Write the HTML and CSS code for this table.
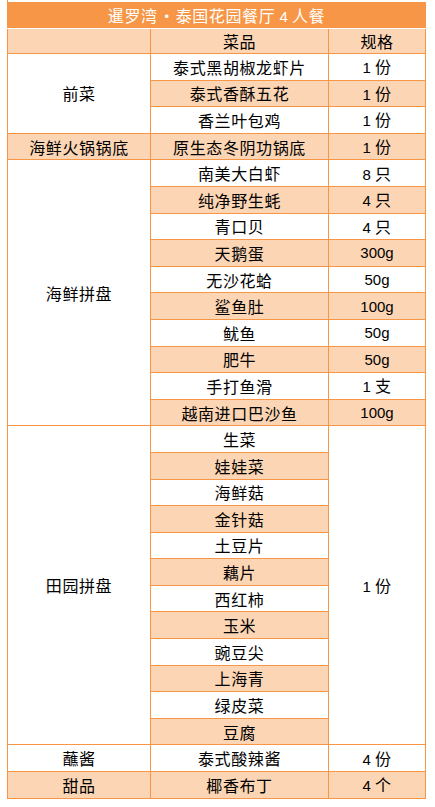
FILE: index.html
```html
<!DOCTYPE html>
<html lang="zh-CN">
<head>
<meta charset="utf-8">
<title>暹罗湾 · 泰国花园餐厅 4 人餐</title>
<link rel="stylesheet" href="styles.css">
</head>
<body>
<div class="sheet">
  <div class="title"><span>暹罗湾<span class="dot">·</span>泰国花园餐厅 <span class="n">4</span> 人餐</span></div>
  <div class="grid">
    <div class="cell c1 hd"></div>
    <div class="cell c2 hd">菜品</div>
    <div class="cell c3 hd">规格</div>

    <div class="cell c1 s3">前菜</div>
    <div class="cell c2">泰式黑胡椒龙虾片</div>
    <div class="cell c3"><span><span class="n">1</span> 份</span></div>
    <div class="cell c2 pk">泰式香酥五花</div>
    <div class="cell c3 pk"><span><span class="n">1</span> 份</span></div>
    <div class="cell c2">香兰叶包鸡</div>
    <div class="cell c3"><span><span class="n">1</span> 份</span></div>

    <div class="cell c1 pk">海鲜火锅锅底</div>
    <div class="cell c2 pk">原生态冬阴功锅底</div>
    <div class="cell c3 pk"><span><span class="n">1</span> 份</span></div>

    <div class="cell c1 s10">海鲜拼盘</div>
    <div class="cell c2">南美大白虾</div>
    <div class="cell c3"><span><span class="n">8</span> 只</span></div>
    <div class="cell c2 pk">纯净野生蚝</div>
    <div class="cell c3 pk"><span><span class="n">4</span> 只</span></div>
    <div class="cell c2">青口贝</div>
    <div class="cell c3"><span><span class="n">4</span> 只</span></div>
    <div class="cell c2 pk">天鹅蛋</div>
    <div class="cell c3 pk"><span class="n">300g</span></div>
    <div class="cell c2">无沙花蛤</div>
    <div class="cell c3"><span class="n">50g</span></div>
    <div class="cell c2 pk">鲨鱼肚</div>
    <div class="cell c3 pk"><span class="n">100g</span></div>
    <div class="cell c2">鱿鱼</div>
    <div class="cell c3"><span class="n">50g</span></div>
    <div class="cell c2 pk">肥牛</div>
    <div class="cell c3 pk"><span class="n">50g</span></div>
    <div class="cell c2">手打鱼滑</div>
    <div class="cell c3"><span><span class="n">1</span> 支</span></div>
    <div class="cell c2 pk">越南进口巴沙鱼</div>
    <div class="cell c3 pk"><span class="n">100g</span></div>

    <div class="cell c1 s12">田园拼盘</div>
    <div class="cell c2">生菜</div>
    <div class="cell c3 s12"><span><span class="n">1</span> 份</span></div>
    <div class="cell c2 pk">娃娃菜</div>
    <div class="cell c2">海鲜菇</div>
    <div class="cell c2 pk">金针菇</div>
    <div class="cell c2">土豆片</div>
    <div class="cell c2 pk">藕片</div>
    <div class="cell c2">西红柿</div>
    <div class="cell c2 pk">玉米</div>
    <div class="cell c2">豌豆尖</div>
    <div class="cell c2 pk">上海青</div>
    <div class="cell c2">绿皮菜</div>
    <div class="cell c2 pk">豆腐</div>

    <div class="cell c1">蘸酱</div>
    <div class="cell c2">泰式酸辣酱</div>
    <div class="cell c3"><span><span class="n">4</span> 份</span></div>

    <div class="cell c1 pk">甜品</div>
    <div class="cell c2 pk">椰香布丁</div>
    <div class="cell c3 pk"><span><span class="n">4</span> 个</span></div>
  </div>
</div>
</body>
</html>
```

FILE: styles.css
```css
html, body {
  margin: 0;
  padding: 0;
  background: #ffffff;
}

body {
  font-family: "Noto Sans CJK SC", "Liberation Sans", sans-serif;
  font-size: 16px;
  color: #000000;
}

.sheet {
  margin-left: 7px;
  width: 418px;
  padding-top: 2px;
  border-left: 1px solid #f79646;
}

.title {
  margin-left: -1px;
  height: 26px;
  border-bottom: 1px solid #ffffff;
  background: #f79646;
  color: #ffffff;
  display: flex;
  align-items: center;
  justify-content: center;
  letter-spacing: 0.6px;
  line-height: 1;
  white-space: pre;
}

.dot {
  display: inline-block;
  width: 18px;
  text-align: center;
  letter-spacing: 0;
}

.grid {
  margin-left: -1px;
  width: 419px;
  box-sizing: border-box;
  display: grid;
  grid-template-columns: 142px 177px 96px;
  grid-template-rows: 24px;
  grid-auto-rows: 25.6px;
  gap: 1px;
  padding: 0 1px 1px 1px;
  background: #f79646;
}

.cell {
  background: #ffffff;
  display: flex;
  align-items: center;
  justify-content: center;
  letter-spacing: 0.6px;
  line-height: 1;
  white-space: pre;
}

.c1 { grid-column: 1; }
.c2 { grid-column: 2; }
.c3 { grid-column: 3; }

.s3 { grid-row: span 3; }
.s10 { grid-row: span 10; }
.s12 { grid-row: span 12; }

.hd,
.pk {
  background: #fcd5b4;
}

.n {
  font-family: "Liberation Sans", sans-serif;
  font-size: 15px;
  letter-spacing: 0;
}
```
